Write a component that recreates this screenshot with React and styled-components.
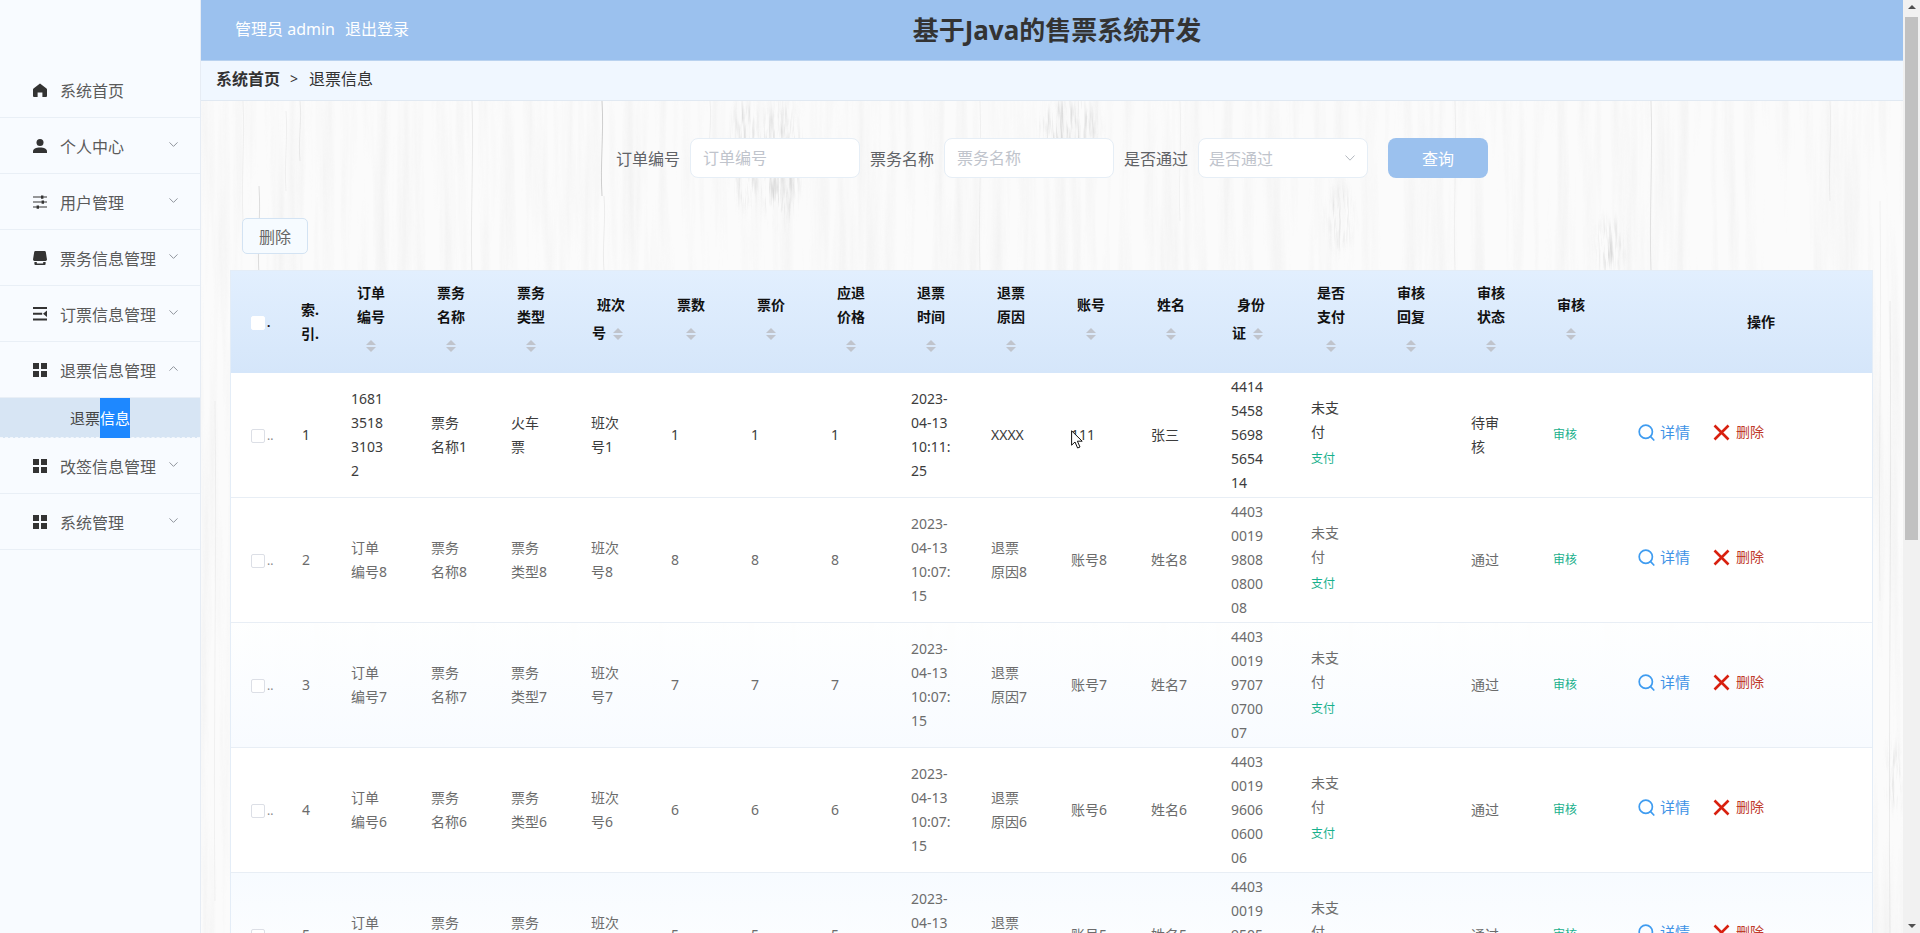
import React from "react";
import styled, { createGlobalStyle } from "styled-components";

const GlobalStyle = createGlobalStyle`
  html, body { margin: 0; padding: 0; height: 100%; overflow: hidden; }
  body { font-family: "Noto Sans", "Noto Sans CJK SC", sans-serif; color: #333; }
  * { box-sizing: border-box; }
  input::placeholder { color: #c0c4cc; }
`;

const Shell = styled.div`
  position: relative;
  display: flex;
  height: 100vh;
  overflow: hidden;
`;

/* sidebar */
const Sidebar = styled.aside`
  flex: 0 0 201px;
  padding-top: 62px;
  background: #f8fbff;
  border-right: 1px solid #e6ecf4;
`;
const MenuItem = styled.div`
  display: flex;
  align-items: center;
  height: 56px;
  padding: 1px 22px 0 33px;
  font-size: 16px;
  color: #5a5a5a;
  border-bottom: 1px solid #e9eff6;
  svg.icon { flex: none; width: 14px; height: 14px; margin-right: 13px; fill: #333; }
`;
const Chevron = styled.svg`
  flex: none;
  width: 9px;
  height: 5px;
  margin-left: auto;
  margin-bottom: 4px;
  fill: none;
  stroke: #8f949c;
  stroke-width: 1;
`;
const SubItem = styled.div`
  height: 40px;
  padding-left: 70px;
  font-size: 15px;
  line-height: 40px;
  color: #444;
  background: #d7e5f4;
  border-bottom: 1px dashed #f3f7fc;
`;
const Marked = styled.span`
  display: inline-block;
  height: 40px;
  color: #fff;
  background: #1e88ff;
`;

/* top */
const Main = styled.div`
  flex: 1;
  min-width: 0;
  display: flex;
  flex-direction: column;
`;
const TopBar = styled.header`
  flex: 0 0 61px;
  display: grid;
  grid-template-columns: 1fr auto 1fr;
  align-items: center;
  padding: 0 24px 0 34px;
  background: #9bc1ee;
  border-bottom: 1px solid #b9d2ef;
`;
const UserLinks = styled.div`
  display: flex;
  gap: 10px;
  margin-bottom: 4px;
  font-size: 16px;
  color: #fff;
`;
const Title = styled.h1`
  margin: 0;
  font-size: 26px;
  font-weight: 700;
  line-height: 32px;
  color: #333;
`;
const Crumbs = styled.nav`
  flex: 0 0 40px;
  display: flex;
  align-items: center;
  padding: 0 0 5px 15px;
  font-size: 16px;
  color: #333;
  background: #f0f7ff;
  border-bottom: 1px solid #e1e9f2;
  b { font-weight: 700; }
  i { margin: 0 11px 0 10px; font-style: normal; font-size: 14px; }
`;

/* content */
const Content = styled.main`
  position: relative;
  flex: 1;
  min-height: 0;
  overflow: hidden;
  padding-top: 37px;
  background: #fbfbfb;
`;
const Grain = styled.svg`
  position: absolute;
  left: 0;
  top: 0;
  width: 100%;
  height: 100%;
  pointer-events: none;
`;
const SearchBar = styled.form`
  position: relative;
  display: flex;
  justify-content: center;
  align-items: center;
  height: 40px;
`;
const Label = styled.label`
  width: 64px;
  margin-right: 10px;
  font-size: 16px;
  white-space: nowrap;
  color: #606266;
`;
const Field = styled.input`
  width: 170px;
  height: 40px;
  margin-right: 10px;
  padding: 0 12px;
  font: inherit;
  font-size: 16px;
  background: #fff;
  border: 1px solid #e6eef6;
  border-radius: 8px;
  outline: none;
`;
const Select = styled.div`
  display: flex;
  align-items: center;
  justify-content: space-between;
  width: 170px;
  height: 40px;
  margin-right: 20px;
  padding: 0 12px 0 10px;
  font-size: 16px;
  color: #c0c4cc;
  background: #fff;
  border: 1px solid #e6eef6;
  border-radius: 8px;
  svg { width: 10px; height: 6px; fill: none; stroke: #b4b8bf; stroke-width: 1; }
`;
const QueryButton = styled.button`
  width: 100px;
  height: 40px;
  padding: 0;
  font: inherit;
  font-size: 16px;
  color: #fff;
  background: #9bc1ee;
  border: 0;
  border-radius: 8px;
`;
const DeleteButton = styled.button`
  position: relative;
  display: block;
  width: 66px;
  height: 36px;
  margin: 40px 0 16px 41px;
  padding: 0;
  font: inherit;
  font-size: 16px;
  color: #666;
  background: #f6fbff;
  border: 1px solid #d3e3f3;
  border-radius: 5px;
`;

/* table */
const TableWrap = styled.div`
  position: relative;
  margin: 0 30px 0 29px;
  border: 1px solid #e4edf7;
  border-bottom: 0;
`;
const Table = styled.table`
  width: 100%;
  table-layout: fixed;
  border-collapse: separate;
  border-spacing: 0;
  thead { background: linear-gradient(#e2effe, #d5e6fa); }
`;
const HeadCell = styled.th`
  height: 102px;
  padding: 0 20px;
  font-size: 14px;
  font-weight: 700;
  line-height: 24px;
  text-align: center;
  color: #111;
  vertical-align: middle;
  &.check { padding: 0 0 0 20px; text-align: left; }
  &.index { padding: 0 0 0 20px; text-align: left; }
  &.actions { padding: 0 0 0 39px; }
`;
const SortCaret = styled.span`
  display: inline-flex;
  flex-direction: column;
  align-items: center;
  justify-content: center;
  gap: 2px;
  width: 24px;
  height: 34px;
  vertical-align: middle;
  &::before, &::after {
    content: "";
    border-left: 5px solid transparent;
    border-right: 5px solid transparent;
  }
  &::before { border-bottom: 5px solid #c0c4cc; }
  &::after { border-top: 5px solid #c0c4cc; }
`;
const Row = styled.tr`
  color: ${(p) => (p.$hover ? "#3c3c3c" : "#6c6c6c")};
  td {
    background: ${(p) => (p.$striped ? "linear-gradient(rgba(254,255,255,.94), #f8fbff)" : "rgba(255,255,255,.93)")};
  }
  &:nth-child(5) td { background: linear-gradient(#f7fbff, rgba(255,255,255,.94)); }
`;
const Cell = styled.td`
  height: 125px;
  padding: 0 20px;
  font-size: 14px;
  line-height: 24px;
  word-break: break-all;
  vertical-align: middle;
  border-bottom: 1px solid #e8eef5;
  &.check { padding: 0 0 0 20px; }
  &.index { padding: 0 0 0 21px; }
  &.audit { padding-left: 22px; }
  &.actions { padding: 0 0 6px 27px; }
`;
const Box = styled.span`
  display: inline-block;
  width: 14px;
  height: 14px;
  background: #fff;
  border: 1px solid ${(p) => (p.$head ? "#fff" : "#dcdfe6")};
  border-radius: 2px;
  vertical-align: middle;
`;
const Dots = styled.span`
  margin-left: 2px;
  font-size: 12px;
  vertical-align: middle;
  color: ${(p) => (p.$head ? "#111" : "#888")};
`;
const TextLink = styled.div`
  display: block;
  height: 30px;
  font-size: 12px;
  line-height: 30px;
  color: #18b08c;
`;
const ActionBar = styled.div`
  display: flex;
  align-items: center;
  white-space: nowrap;
`;
const ActionLink = styled.span`
  display: inline-flex;
  align-items: center;
  font-size: ${(p) => (p.$danger ? "14px" : "15px")};
  color: ${(p) => (p.$danger ? "#c0392b" : "#3f93e6")};
  margin-right: ${(p) => (p.$danger ? "0" : "23px")};
  svg { flex: none; width: 17px; height: 17px; margin-right: ${(p) => (p.$danger ? "6px" : "5px")}; }
`;

/* browser scrollbar of the shot */
const Rail = styled.div`
  position: relative;
  flex: 0 0 17px;
  display: flex;
  flex-direction: column;
  background: #f1f1f1;
`;
const RailArrow = styled.span`
  flex: none;
  align-self: center;
  width: 0;
  height: 0;
  margin: ${(p) => (p.$down ? "auto 0 5px" : "5px 0 8px")};
  border-left: 4px solid transparent;
  border-right: 4px solid transparent;
  ${(p) => (p.$down ? "border-top: 4px solid #505050;" : "border-bottom: 4px solid #505050;")}
`;
const RailThumb = styled.span`
  flex: 0 0 523px;
  margin: 0 2px;
  background: #c1c1c1;
`;
const Cursor = styled.svg`
  position: absolute;
  left: 1071px;
  top: 430px;
  width: 13px;
  height: 19px;
`;

const icons = {
  home: <path d="M7 0.5 L13.5 5.6 Q14 6 14 6.6 V13 Q14 14 13 14 H9.4 V9.4 H4.6 V14 H1 Q0 14 0 13 V6.6 Q0 6 .5 5.6 Z" />,
  user: (
    <>
      <circle cx="7" cy="3.5" r="3.5" />
      <path d="M0 14 V12.3 C0 10 3 8.6 7 8.6 S14 10 14 12.3 V14 Z" />
    </>
  ),
  sliders: <path d="M0 1.6 H8 V.4 H10.4 V1.6 H14 V2.6 H10.4 V3.8 H8 V2.6 H0 Z M0 6.6 H8.6 V5.4 H11 V6.6 H14 V7.6 H11 V8.8 H8.6 V7.6 H0 Z M0 11.6 H3.6 V10.4 H6 V11.6 H14 V12.6 H6 V13.8 H3.6 V12.6 H0 Z" />,
  shop: <path d="M2.4 0 H11.6 Q12.6 0 12.8 1 L14 8.6 Q14 10 12.6 10 H1.4 Q0 10 0 8.6 L1.2 1 Q1.4 0 2.4 0 Z M1.4 11 H3.8 V12.4 H10.2 V11 H12.6 V13 Q12.6 14 11.6 14 H2.4 Q1.4 14 1.4 13 Z" />,
  unfold: <path d="M0 0 H14 V2 H0 Z M0 5.8 H9.2 V7.8 H0 Z M0 11.6 H14 V13.6 H0 Z M14 3.6 V10 L10 6.8 Z" />,
  grid: <path d="M0 0 H6 V6 H0 Z M8 0 H14 V6 H8 Z M0 8 H6 V14 H0 Z M8 8 H14 V14 H8 Z" />,
};

const menu = [
  { label: "系统首页", icon: "home", plain: true },
  { label: "个人中心", icon: "user" },
  { label: "用户管理", icon: "sliders" },
  { label: "票务信息管理", icon: "shop" },
  { label: "订票信息管理", icon: "unfold" },
  { label: "退票信息管理", icon: "grid", open: true },
  { label: "改签信息管理", icon: "grid" },
  { label: "系统管理", icon: "grid" },
];

const columns = [
  "订单编号", "票务名称", "票务类型", "班次号", "票数", "票价", "应退价格", "退票时间",
  "退票原因", "账号", "姓名", "身份证", "是否支付", "审核回复", "审核状态", "审核",
];

const rows = [
  { no: 1, order: "16813518​31032", name: "票务名称1", type: "火车票", bus: "班次号1", n: 1, time: "2023-04-13 10:11:25", why: "XXXX", acct: "111", person: "张三", id: "441454585698565414", state: "待审核" },
  { no: 2, order: "订单编号8", name: "票务名称8", type: "票务类型8", bus: "班次号8", n: 8, time: "2023-04-13 10:07:15", why: "退票原因8", acct: "账号8", person: "姓名8", id: "440300199808080008", state: "通过" },
  { no: 3, order: "订单编号7", name: "票务名称7", type: "票务类型7", bus: "班次号7", n: 7, time: "2023-04-13 10:07:15", why: "退票原因7", acct: "账号7", person: "姓名7", id: "440300199707070007", state: "通过" },
  { no: 4, order: "订单编号6", name: "票务名称6", type: "票务类型6", bus: "班次号6", n: 6, time: "2023-04-13 10:07:15", why: "退票原因6", acct: "账号6", person: "姓名6", id: "440300199606060006", state: "通过" },
  { no: 5, order: "订单编号5", name: "票务名称5", type: "票务类型5", bus: "班次号5", n: 5, time: "2023-04-13 10:07:15", why: "退票原因5", acct: "账号5", person: "姓名5", id: "440300199505050005", state: "通过" },
];

// wood grain behind the content: [x, top, bottom, opacity]
const grainLines = [
  [602, 0, 95, 0.3], [604, 95, 170, 0.1], [472, 0, 175, 0.12], [259, 85, 175, 0.2], [1651, 0, 170, 0.16],
  [243, 0, 120, 0.08], [300, 0, 60, 0.1], [286, 10, 90, 0.08], [710, 0, 60, 0.08], [980, 0, 170, 0.08],
  [1180, 0, 120, 0.06], [1455, 0, 170, 0.08], [1830, 0, 100, 0.08], [1890, 200, 832, 0.1], [215, 300, 800, 0.07],
  [1880, 100, 500, 0.07],
];
// speckled knots: [x, top, half width, height]
const blotches = [
  [745, 0, 14, 105], [780, 0, 20, 120], [1340, 90, 12, 55], [1610, 120, 14, 50], [1895, 640, 6, 70], [1070, 0, 30, 60],
];

function Page() {
  return (
    <Shell>
      <Sidebar>
        {menu.map((m) => (
          <React.Fragment key={m.label}>
            <MenuItem>
              <svg className="icon" viewBox="0 0 14 14">{icons[m.icon]}</svg>
              {m.label}
              {!m.plain && (
                <Chevron viewBox="0 0 9 5">
                  <path d={m.open ? "M.5 4.6 L4.5 .6 L8.5 4.6" : "M.5 .4 L4.5 4.4 L8.5 .4"} />
                </Chevron>
              )}
            </MenuItem>
            {m.open && (
              <SubItem>
                退票<Marked>信息</Marked>
              </SubItem>
            )}
          </React.Fragment>
        ))}
      </Sidebar>

      <Main>
        <TopBar>
          <UserLinks>
            <span>管理员 admin</span>
            <span>退出登录</span>
          </UserLinks>
          <Title>基于Java的售票系统开发</Title>
          <span />
        </TopBar>
        <Crumbs>
          <b>系统首页</b>
          <i>&gt;</i>
          退票信息
        </Crumbs>

        <Content>
          <Grain aria-hidden="true">
            <filter id="wood" x="0" y="0" width="100%" height="100%">
              <feTurbulence type="fractalNoise" baseFrequency="0.09 0.004" numOctaves="4" seed="7" />
              <feColorMatrix values="0 0 0 0 .5  0 0 0 0 .5  0 0 0 0 .5  .9 0 0 0 -.38" />
            </filter>
            <filter id="knot" x="-30%" y="-30%" width="160%" height="160%">
              <feGaussianBlur in="SourceGraphic" stdDeviation="4 8" result="soft" />
              <feTurbulence type="fractalNoise" baseFrequency="0.35 0.03" numOctaves="3" seed="3" />
              <feColorMatrix values="0 0 0 0 .45  0 0 0 0 .45  0 0 0 0 .45  2.6 0 0 0 -1.15" />
              <feComposite in2="soft" operator="in" />
            </filter>
            <rect width="100%" height="100%" filter="url(#wood)" opacity=".3" />
            {grainLines.map(([x, a, b, o]) => (
              <path
                key={x + "-" + a}
                d={`M${x - 201} ${a} C${x - 199} ${a + (b - a) / 3} ${x - 203} ${a + (2 * (b - a)) / 3} ${x - 201} ${b}`}
                fill="none"
                stroke="#666"
                strokeOpacity={o}
              />
            ))}
            <g filter="url(#knot)" opacity=".45">
              {blotches.map(([x, y, w, h]) => (
                <ellipse key={x + "-" + y} cx={x - 201} cy={y + h / 2} rx={w} ry={h / 2} fill="#000" />
              ))}
            </g>
          </Grain>

          <SearchBar>
            <Label>订单编号</Label>
            <Field placeholder="订单编号" />
            <Label>票务名称</Label>
            <Field placeholder="票务名称" />
            <Label>是否通过</Label>
            <Select>
              是否通过
              <svg viewBox="0 0 10 6"><path d="M.5 .5 L5 5.2 L9.5 .5" /></svg>
            </Select>
            <QueryButton type="button">查询</QueryButton>
          </SearchBar>

          <DeleteButton type="button">删除</DeleteButton>

          <TableWrap>
            <Table>
              <colgroup>
                <col width="50" />
                <col width="50" />
                {columns.map((c) => (
                  <col key={c} width="80" />
                ))}
                <col />
              </colgroup>
              <thead>
                <tr>
                  <HeadCell className="check">
                    <Box $head />
                    <Dots $head>.</Dots>
                  </HeadCell>
                  <HeadCell className="index">
                    索.
                    <br />
                    引.
                  </HeadCell>
                  {columns.map((c) => (
                    <HeadCell key={c}>
                      {c}
                      <SortCaret />
                    </HeadCell>
                  ))}
                  <HeadCell className="actions">操作</HeadCell>
                </tr>
              </thead>
              <tbody>
                {rows.map((r) => (
                  <Row key={r.no} $hover={r.no === 1} $striped={r.no % 2 === 1 && r.no > 1}>
                    <Cell className="check">
                      <Box />
                      <Dots>..</Dots>
                    </Cell>
                    <Cell className="index">{r.no}</Cell>
                    <Cell>{r.order}</Cell>
                    <Cell>{r.name}</Cell>
                    <Cell>{r.type}</Cell>
                    <Cell>{r.bus}</Cell>
                    <Cell>{r.n}</Cell>
                    <Cell>{r.n}</Cell>
                    <Cell>{r.n}</Cell>
                    <Cell>{r.time}</Cell>
                    <Cell>{r.why}</Cell>
                    <Cell>{r.acct}</Cell>
                    <Cell>{r.person}</Cell>
                    <Cell>{r.id}</Cell>
                    <Cell>
                      未支付
                      <TextLink>支付</TextLink>
                    </Cell>
                    <Cell />
                    <Cell>{r.state}</Cell>
                    <Cell className="audit">
                      <TextLink>审核</TextLink>
                    </Cell>
                    <Cell className="actions">
                      <ActionBar>
                        <ActionLink>
                          <svg viewBox="0 0 17 17" fill="none" stroke="#3f9cf0" strokeWidth="1.7">
                            <circle cx="7.8" cy="7.8" r="6.6" />
                            <path d="M12.6 12.6 L15.8 16" strokeLinecap="round" />
                          </svg>
                          详情
                        </ActionLink>
                        <ActionLink $danger>
                          <svg viewBox="0 0 17 17" fill="none" stroke="#d8200f" strokeWidth="2.6">
                            <path d="M1.5 1.5 L15.5 15.5 M15.5 1.5 L1.5 15.5" />
                          </svg>
                          删除
                        </ActionLink>
                      </ActionBar>
                    </Cell>
                  </Row>
                ))}
              </tbody>
            </Table>
          </TableWrap>
        </Content>
      </Main>

      <Rail>
        <RailArrow />
        <RailThumb />
        <RailArrow $down />
      </Rail>

      <Cursor viewBox="0 0 13 19" aria-hidden="true">
        <path d="M.6 .8 V15.2 L4 12 L6.6 18 L9 17 L6.4 11.2 H11.2 Z" fill="#fff" stroke="#111" strokeWidth="1" />
      </Cursor>
    </Shell>
  );
}

export default function App() {
  return (
    <>
      <GlobalStyle />
      <Page />
    </>
  );
}
